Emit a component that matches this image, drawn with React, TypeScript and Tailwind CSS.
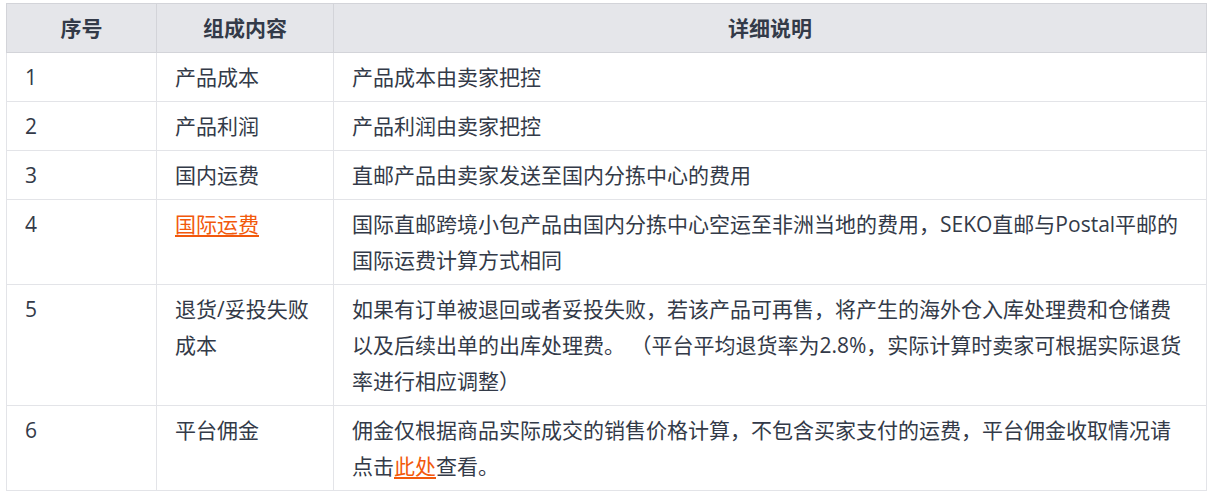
import type { ReactNode } from 'react';

interface Row {
  no: string;
  item: ReactNode;
  detail: ReactNode;
}

const linkCls = 'text-[#f2590c] underline underline-offset-[3px] decoration-[2px]';

const rows: Row[] = [
  { no: '1', item: '产品成本', detail: '产品成本由卖家把控' },
  { no: '2', item: '产品利润', detail: '产品利润由卖家把控' },
  { no: '3', item: '国内运费', detail: '直邮产品由卖家发送至国内分拣中心的费用' },
  {
    no: '4',
    item: <a className={linkCls}>国际运费</a>,
    detail: (
      <>
        国际直邮跨境小包产品由国内分拣中心空运至非洲当地的费用，SEKO直邮与Postal平邮的
        <br />
        国际运费计算方式相同
      </>
    ),
  },
  {
    no: '5',
    item: (
      <>
        退货/妥投失败
        <br />
        成本
      </>
    ),
    detail: (
      <>
        如果有订单被退回或者妥投失败，若该产品可再售，将产生的海外仓入库处理费和仓储费
        <br />
        以及后续出单的出库处理费。 （平台平均退货率为2.8%，实际计算时卖家可根据实际退货
        <br />
        率进行相应调整）
      </>
    ),
  },
  {
    no: '6',
    item: '平台佣金',
    detail: (
      <>
        佣金仅根据商品实际成交的销售价格计算，不包含买家支付的运费，平台佣金收取情况请
        <br />
        点击<a className={linkCls}>此处</a>查看。
      </>
    ),
  },
];

export default function App() {
  return (
    <div className="min-h-[496px] bg-white pl-[6px] pt-[3px] font-['Open_Sans','Noto_Sans_CJK_SC',sans-serif] text-[21px] leading-[36px] text-[#333a48]">
      <table className="w-[1201px] table-fixed border-collapse">
        <colgroup>
          <col className="w-[150px]" />
          <col className="w-[177px]" />
          <col />
        </colgroup>
        <thead>
          <tr className="bg-[#e5e6ea]">
            {['序号', '组成内容', '详细说明'].map((h) => (
              <th
                key={h}
                className="h-[49px] border border-[#d3d4d9] px-[18px] py-[6px] text-center font-bold"
              >
                {h}
              </th>
            ))}
          </tr>
        </thead>
        <tbody>
          {rows.map((r) => (
            <tr key={r.no}>
              <td className="border border-[#e3e4e8] px-[18px] py-[6px] align-top whitespace-nowrap">{r.no}</td>
              <td className="border border-[#e3e4e8] px-[18px] py-[6px] align-top whitespace-nowrap">{r.item}</td>
              <td className="border border-[#e3e4e8] px-[18px] py-[6px] align-top whitespace-nowrap">{r.detail}</td>
            </tr>
          ))}
        </tbody>
      </table>
    </div>
  );
}
